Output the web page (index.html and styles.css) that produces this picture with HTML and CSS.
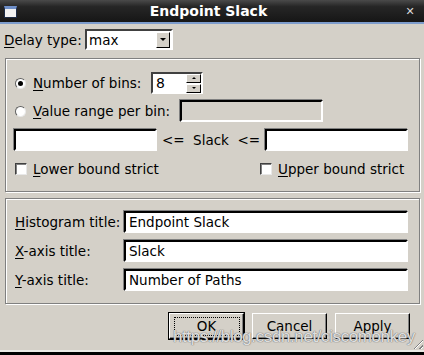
FILE: index.html
```html
<!DOCTYPE html>
<html lang="en">
<head>
  <meta charset="UTF-8" />
  <title>Endpoint Slack</title>
  <link rel="stylesheet" href="styles.css">
</head>
<body>
  <div class="window">
    <div class="titlebar">
      <span class="app-icon"></span>
      <span class="title">Endpoint Slack</span>
      <span class="close">&#x2715;</span>
    </div>

    <div class="content">
      <div class="delay-row">
        <span class="lbl"><u>D</u>elay type:</span>
        <div class="combo">
          <span class="combo-text">max</span>
          <span class="combo-btn"><span class="tri-down"></span></span>
        </div>
      </div>

      <div class="group group-bins">
        <div class="row">
          <span class="radio checked"></span>
          <span class="lbl"><u>N</u>umber of bins:</span>
          <div class="spin">
            <span class="spin-text">8</span>
            <span class="spin-btns">
              <span class="spin-btn"><span class="tri-up small"></span></span>
              <span class="spin-btn"><span class="tri-down small"></span></span>
            </span>
          </div>
        </div>
        <div class="row">
          <span class="radio"></span>
          <span class="lbl"><u>V</u>alue range per bin:</span>
          <span class="entry disabled range-entry"></span>
        </div>
        <div class="row bounds">
          <span class="entry bound-entry"></span>
          <span class="slack-lbl">&lt;= &nbsp;Slack &nbsp;&lt;=</span>
          <span class="entry bound-entry"></span>
        </div>
        <div class="row checks">
          <span class="check-item"><span class="check"></span><span class="lbl"><u>L</u>ower bound strict</span></span>
          <span class="check-item"><span class="check"></span><span class="lbl"><u>U</u>pper bound strict</span></span>
        </div>
      </div>

      <div class="group group-titles">
        <div class="title-row">
          <span class="lbl"><u>H</u>istogram title:</span>
          <span class="entry wide">Endpoint Slack</span>
        </div>
        <div class="title-row">
          <span class="lbl"><u>X</u>-axis title:</span>
          <span class="entry wide">Slack</span>
        </div>
        <div class="title-row">
          <span class="lbl"><u>Y</u>-axis title:</span>
          <span class="entry wide">Number of Paths</span>
        </div>
      </div>

      <div class="buttons">
        <span class="btn default"><span class="focus">OK</span></span>
        <span class="btn">Cancel</span>
        <span class="btn">Apply</span>
      </div>

      <span class="watermark">https://blog.csdn.net/ciscomonkey</span>
      <span class="grip"></span>
    </div>
    <div class="bottom-edge"></div>
  </div>
</body>
</html>
```

FILE: styles.css
```css
:root {
  --fondo: #d4d0c8;
  --sombra: #808080;
  --luz: #ffffff;
  --negro: #000000;
}

body {
  margin: 0;
  padding: 0;
  background: var(--negro);
  font-family: "DejaVu Sans", sans-serif;
  font-size: 13.5px;
  color: #000;
}

u {
  text-decoration: underline;
  text-underline-offset: 2px;
}

.window {
  width: 424px;
  height: 355px;
  display: flex;
  flex-direction: column;
  overflow: hidden;
}

/* barra de titulo */
.titlebar {
  height: 22px;
  border-bottom: 2px solid #7d9ccc;
  background: linear-gradient(#4a4a4a, #262626 30%, #161616);
  display: flex;
  align-items: center;
  position: relative;
}

.app-icon {
  width: 11px;
  height: 8px;
  margin-left: 4px;
  margin-top: 2px;
  border: 1px solid #1d2a44;
  border-top: 3px solid #6f8fc8;
  background: #f2f2f2;
}

.title {
  flex: 1;
  text-align: center;
  color: #fff;
  font-weight: bold;
  font-size: 14px;
}

.close {
  color: #d8d8d8;
  font-size: 11px;
  font-weight: bold;
  width: 20px;
  margin-right: 4px;
  text-align: center;
}

.content {
  flex: 1;
  background: var(--fondo);
  position: relative;
}

.bottom-edge {
  height: 2px;
  background: #ebe9e5;
  border-bottom: 3px solid #000;
}

.lbl {
  white-space: nowrap;
}

/* fila delay */
.delay-row {
  display: flex;
  align-items: center;
  height: 21px;
  padding: 5px 0 0 4px;
  margin-bottom: 8px;
}

.delay-row .lbl {
  width: 81px;
  flex: none;
}

.combo {
  width: 84px;
  height: 17px;
  background: #fff;
  border: 2px solid;
  border-color: #404040 #fff #fff #404040;
  display: flex;
  align-items: center;
}

.combo-text {
  flex: 1;
  padding-left: 2px;
}

.combo-btn {
  width: 12px;
  height: 14px;
  margin-right: 1px;
  background: var(--fondo);
  border: 1px solid;
  border-color: #fff #000 #000 #fff;
  display: flex;
  align-items: center;
  justify-content: center;
}

.tri-down {
  width: 0;
  height: 0;
  border-left: 3px solid transparent;
  border-right: 3px solid transparent;
  border-top: 3px solid #000;
}

.tri-up {
  width: 0;
  height: 0;
  border-left: 3px solid transparent;
  border-right: 3px solid transparent;
  border-bottom: 3px solid #000;
}

.tri-up.small,
.tri-down.small {
  border-left-width: 2px;
  border-right-width: 2px;
  border-top-width: 2px;
  border-bottom-width: 2px;
}

.tri-down.small { border-bottom: 0; }
.tri-up.small { border-top: 0; }

/* grupos */
.group {
  margin: 0 4px 0 5px;
  border: 1px solid var(--sombra);
  box-shadow: inset 1px 1px var(--luz), 1px 1px var(--luz);
}

.group-bins {
  padding: 13px 11px 11px 8px;
  height: 108px;
}

.row {
  display: flex;
  align-items: center;
  height: 22px;
}

.row + .row {
  margin-top: 6px;
}

.row.bounds {
  margin-top: 7px;
}

.row.checks {
  margin-top: 8px;
  height: 20px;
  display: grid;
  grid-template-columns: 246px auto;
  align-items: center;
}

.radio {
  width: 9px;
  height: 9px;
  flex: none;
  border-radius: 50%;
  background: #fff;
  border: 1px solid;
  border-color: #606060 #e8e8e8 #e8e8e8 #606060;
  margin: 0 7px 0 1px;
  position: relative;
}

.radio.checked::after {
  content: "";
  position: absolute;
  left: 2px;
  top: 2px;
  width: 5px;
  height: 5px;
  border-radius: 50%;
  background: #000;
}

.row .lbl {
  width: 118px;
  flex: none;
}

.row:nth-child(2) .lbl {
  width: 147px;
}

.spin {
  width: 48px;
  height: 18px;
  background: #fff;
  border: 2px solid;
  border-color: #404040 #fff #fff #404040;
  display: flex;
  align-items: center;
}

.spin-text {
  flex: 1;
  padding-left: 3px;
  font-size: 14px;
}

.spin-btns {
  display: flex;
  flex-direction: column;
  gap: 1px;
}

.spin-btn {
  width: 13px;
  height: 7px;
  background: var(--fondo);
  border: 1px solid;
  border-color: #fff #000 #000 #fff;
  display: flex;
  align-items: center;
  justify-content: center;
}

.entry {
  height: 18px;
  line-height: 18px;
  background: #fff;
  border: 2px solid;
  border-color: #000 #fff #fff #000;
  box-shadow: -1px -1px #808080;
  padding-left: 3px;
  white-space: nowrap;
  box-sizing: content-box;
}

.entry.disabled {
  background: var(--fondo);
}

.range-entry,
.bound-entry {
  width: 136px;
  flex: none;
}

.slack-lbl {
  flex: 1;
  text-align: center;
  white-space: pre;
}

.check-item {
  display: flex;
  align-items: center;
}

.check {
  width: 10px;
  height: 10px;
  flex: none;
  background: #fff;
  border: 1px solid;
  border-color: #404040 #e8e8e8 #e8e8e8 #404040;
  box-shadow: inset 1px 1px #808080;
  margin: 0 6px 0 0;
}

.checks .check-item:first-child {
  margin-left: 1px;
}

.group-titles {
  margin-top: 6px;
  padding: 12px 11px 12px 9px;
}

.title-row {
  display: flex;
  align-items: center;
  height: 22px;
}

.title-row + .title-row {
  margin-top: 7px;
}

.title-row .lbl {
  width: 109px;
  flex: none;
}

.entry.wide {
  flex: 1;
}

/* botones */
.buttons {
  display: flex;
  justify-content: flex-end;
  gap: 8px;
  padding-right: 14px;
  margin-top: 9px;
}

.btn {
  width: 73px;
  height: 24px;
  display: flex;
  align-items: center;
  justify-content: center;
  background: var(--fondo);
  border: 1px solid;
  border-color: #fff #000 #000 #fff;
  box-shadow: inset -1px -1px #808080;
}

.btn.default {
  outline: 1px solid #000;
}

.focus {
  border: 1px dotted #000;
  width: 64px;
  height: 17px;
  display: flex;
  align-items: center;
  justify-content: center;
}

/* marca de agua */
.watermark {
  position: absolute;
  left: 173px;
  top: 303px;
  font-family: "Liberation Sans", sans-serif;
  font-size: 17px;
  letter-spacing: -0.4px;
  color: rgba(255, 255, 255, 0.8);
  text-shadow: 0 0 1px #6a6a6a, 0 0 1px #6a6a6a;
  white-space: nowrap;
  pointer-events: none;
}

.grip {
  position: absolute;
  right: 1px;
  bottom: 1px;
  width: 12px;
  height: 12px;
  background: repeating-linear-gradient(135deg, transparent 0 2px, #808080 2px 3px, #fff 3px 4px);
  clip-path: polygon(100% 0, 100% 100%, 0 100%);
}
```
